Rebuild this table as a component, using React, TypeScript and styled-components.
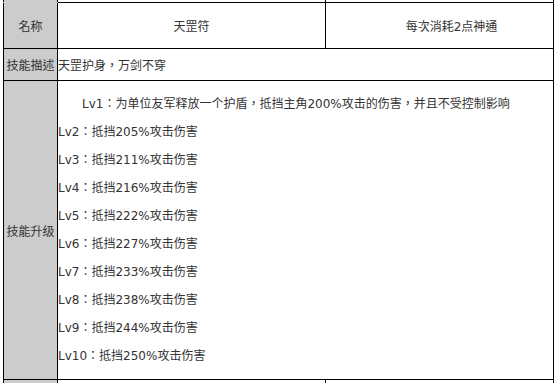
import React from 'react';
import styled, { createGlobalStyle } from 'styled-components';

const GlobalStyle = createGlobalStyle`
  body {
    margin: 0;
    background: #fff;
    overflow: hidden;
  }
`;

const Table = styled.table`
  border-collapse: collapse;
  table-layout: fixed;
  width: 550px;
  margin: -20px 0 0 3px;
  color: #333;
  font-family: "DejaVu Sans", "Noto Sans CJK TC", sans-serif;
  font-size: 12px;
`;

const Row = styled.tr<{ $h: number }>`
  height: ${(p) => p.$h}px;
`;

const Cell = styled.td<{ $center?: boolean; $padLeft?: number }>`
  border: 1px solid #000;
  padding: 0 0 0 ${(p) => p.$padLeft || 0}px;
  text-align: ${(p) => (p.$center ? 'center' : 'left')};
  vertical-align: middle;
  white-space: nowrap;
`;

const Label = styled.td<{ $hideTop?: boolean; $hideBottom?: boolean }>`
  background: #ccc;
  border: 1px solid #000;
  ${(p) => (p.$hideTop ? 'border-top-color: #ccc;' : '')}
  ${(p) => (p.$hideBottom ? 'border-bottom-color: #ccc;' : '')}
  padding: 0;
  text-align: center;
  vertical-align: middle;
  white-space: nowrap;
`;

const LevelList = styled.div`
  padding: 9px 0;
`;

const Level = styled.p<{ $indent?: boolean }>`
  margin: 0;
  line-height: 28px;
  text-indent: ${(p) => (p.$indent ? '24px' : '0')};
`;

const levels = [
  { lv: 'Lv1', text: '为单位友军释放一个护盾，抵挡主角200%攻击的伤害，并且不受控制影响' },
  { lv: 'Lv2', text: '抵挡205%攻击伤害' },
  { lv: 'Lv3', text: '抵挡211%攻击伤害' },
  { lv: 'Lv4', text: '抵挡216%攻击伤害' },
  { lv: 'Lv5', text: '抵挡222%攻击伤害' },
  { lv: 'Lv6', text: '抵挡227%攻击伤害' },
  { lv: 'Lv7', text: '抵挡233%攻击伤害' },
  { lv: 'Lv8', text: '抵挡238%攻击伤害' },
  { lv: 'Lv9', text: '抵挡244%攻击伤害' },
  { lv: 'Lv10', text: '抵挡250%攻击伤害' },
];

const App = () => (
  <>
    <GlobalStyle />
    <Table>
      <colgroup>
        <col style={{ width: 54 }} />
        <col style={{ width: 268 }} />
        <col style={{ width: 228 }} />
      </colgroup>
      <tbody>
        <Row $h={22}>
          <Label $hideBottom />
          <Cell />
          <Cell />
        </Row>
        <Row $h={46}>
          <Label $hideTop>名称</Label>
          <Cell $center>天罡符</Cell>
          <Cell $center $padLeft={24}>每次消耗2点神通</Cell>
        </Row>
        <Row $h={32}>
          <Label>技能描述</Label>
          <Cell colSpan={2}>天罡护身，万剑不穿</Cell>
        </Row>
        <Row $h={299}>
          <Label>技能升级</Label>
          <Cell colSpan={2}>
            <LevelList>
              {levels.map((l, i) => (
                <Level key={l.lv} $indent={i === 0}>
                  {l.lv}：{l.text}
                </Level>
              ))}
            </LevelList>
          </Cell>
        </Row>
        <Row $h={4}>
          <Label />
          <Cell />
          <Cell />
        </Row>
      </tbody>
    </Table>
  </>
);

export default App;
